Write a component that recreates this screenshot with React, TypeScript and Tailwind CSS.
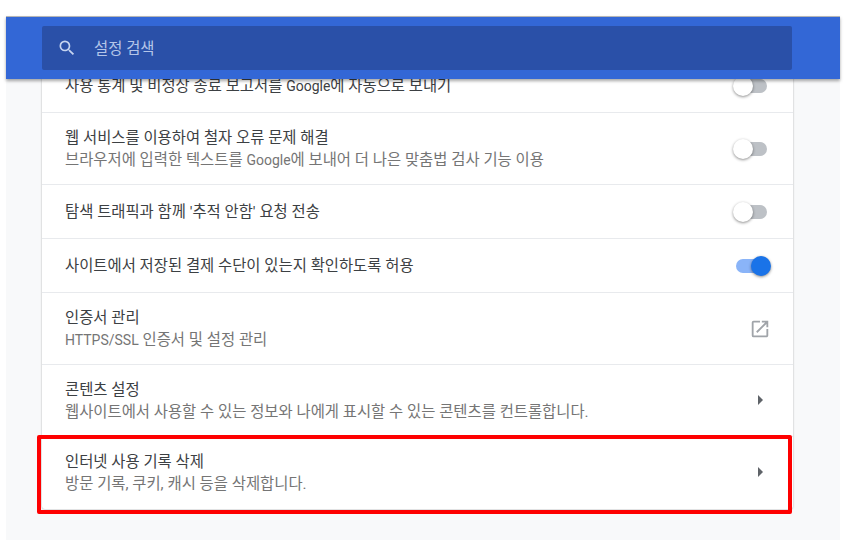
const font = { fontFamily: '"Roboto", "Noto Sans CJK KR", sans-serif' };

function Toggle({ on }: { on?: boolean }) {
  return (
    <div className="relative mr-[4px] h-[14px] w-[34px]">
      <div className={`ml-[3px] h-[14px] w-[31px] rounded-full ${on ? "bg-[#8ab4f8]" : "bg-[#bdc1c6]"}`} />
      <div
        className={`absolute top-[-3px] h-[20px] w-[20px] rounded-full shadow-[0_1px_3px_rgba(0,0,0,0.45)] ${
          on ? "right-[-4px] bg-[#1a73e8]" : "left-0 bg-white"
        }`}
      />
    </div>
  );
}

function Arrow() {
  return (
    <div className="mb-[2px] mr-[8px] h-0 w-0 border-y-[5px] border-l-[5px] border-y-transparent border-l-[#5f6368]" />
  );
}

function Latin({ children }: { children: string }) {
  return <span className="text-[14px]">{children}</span>;
}

function Row({
  title,
  sub,
  children,
  last,
}: {
  title: React.ReactNode;
  sub?: React.ReactNode;
  children: React.ReactNode;
  last?: boolean;
}) {
  return (
    <div
      className={`flex items-center justify-between pl-[23px] pr-[22px] ${sub ? "h-[72px]" : "h-[54px]"} ${
        last ? "" : "border-b border-[#e8eaed]"
      }`}
    >
      <div>
        <div className="text-[15.4px] leading-[22px] text-[#3c4043]">{title}</div>
        {sub && <div className="text-[15.4px] leading-[22px] text-[#757575]">{sub}</div>}
      </div>
      {children}
    </div>
  );
}

export default function App() {
  return (
    <div className="h-[540px] w-[850px] overflow-hidden bg-white pl-[6px] pr-[10px] pt-[16px]" style={font}>
      <div className="flex h-[524px] flex-col bg-[#f8f9fa]">
        <header className="relative z-10 h-[63px] shrink-0 border-t border-[#b5b5b5] bg-[#3367d6] pl-[36px] pr-[48px] pt-[9px] shadow-[0_2px_3px_rgba(0,0,0,0.35)]">
          <div className="flex h-[44px] items-center rounded-[2px] bg-[#2a50a8] pl-[15px]">
            <svg width="20" height="20" viewBox="0 0 24 24" fill="#c6d4f0">
              <path d="M15.5 14h-.79l-.28-.27A6.47 6.47 0 0 0 16 9.5 6.5 6.5 0 1 0 9.5 16c1.61 0 3.09-.59 4.23-1.57l.27.28v.79l5 4.99L20.49 19l-4.99-5zm-6 0C7.01 14 5 11.99 5 9.5S7.01 5 9.5 5 14 7.01 14 9.5 11.99 14 9.5 14z" />
            </svg>
            <span className="ml-[17px] mt-[3px] text-[15.4px] text-[#b4c5e8]">설정 검색</span>
          </div>
        </header>
        <main className="relative flex-1 pl-[36px] pr-[47px]">
          <div className="-mt-[20px] rounded-b-[3px] bg-white shadow-[0_0_2px_rgba(0,0,0,0.35)]">
            <Row title={<>사용 통계 및 비정상 종료 보고서를 <Latin>Google</Latin>에 자동으로 보내기</>}>
              <Toggle />
            </Row>
            <Row
              title="웹 서비스를 이용하여 철자 오류 문제 해결"
              sub={<>브라우저에 입력한 텍스트를 <Latin>Google</Latin>에 보내어 더 나은 맞춤법 검사 기능 이용</>}
            >
              <Toggle />
            </Row>
            <Row title="탐색 트래픽과 함께 '추적 안함' 요청 전송">
              <Toggle />
            </Row>
            <Row title="사이트에서 저장된 결제 수단이 있는지 확인하도록 허용">
              <Toggle on />
            </Row>
            <Row title="인증서 관리" sub={<><Latin>HTTPS/SSL</Latin> 인증서 및 설정 관리</>}>
              <svg width="22" height="22" viewBox="0 0 24 24" fill="#a0a4a9">
                <path d="M19 19H5V5h7V3H5a2 2 0 0 0-2 2v14a2 2 0 0 0 2 2h14c1.1 0 2-.9 2-2v-7h-2v7zM14 3v2h3.59l-9.83 9.83 1.41 1.41L19 6.41V10h2V3h-7z" />
              </svg>
            </Row>
            <Row title="콘텐츠 설정" sub="웹사이트에서 사용할 수 있는 정보와 나에게 표시할 수 있는 콘텐츠를 컨트롤합니다.">
              <Arrow />
            </Row>
            <Row title="인터넷 사용 기록 삭제" sub="방문 기록, 쿠키, 캐시 등을 삭제합니다." last>
              <Arrow />
            </Row>
          </div>
          <div className="absolute left-[31px] top-[356px] h-[79px] w-[755px] rounded-[2px] border-[4px] border-[#fe0000]" />
        </main>
      </div>
    </div>
  );
}
